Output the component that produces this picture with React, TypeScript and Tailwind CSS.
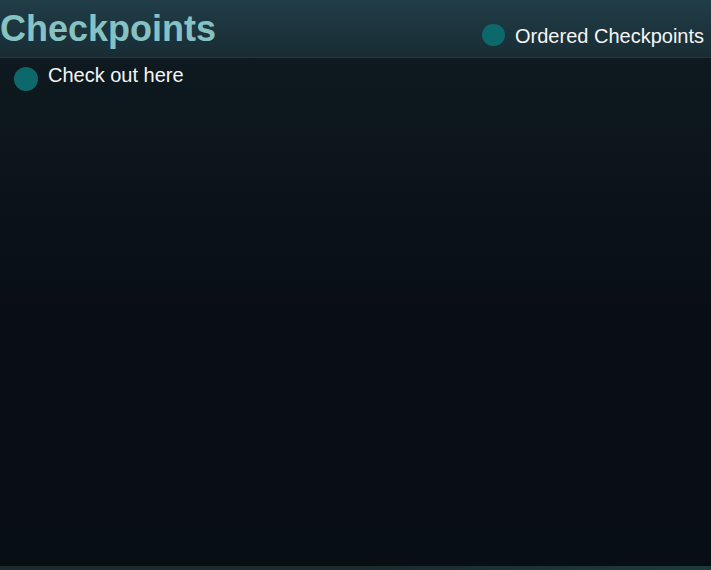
import React from "react";

export default function App() {
  return (
    <div
      className="w-[711px] h-[570px] flex flex-col overflow-hidden bg-[#0a1117]"
      style={{ fontFamily: '"Liberation Sans", Arial, sans-serif' }}
    >
      <div className="h-[58px] shrink-0 flex justify-between items-start bg-gradient-to-b from-[#203d48] to-[#192c34] border-b border-[#26363c]">
        <div className="pt-[11px] text-[36px] leading-[36px] font-bold text-[#86c2c3]">
          Checkpoints
        </div>
        <div className="pt-[24px] pr-[7px] flex items-start gap-[10px]">
          <div className="w-[23px] h-[22px] rounded-full bg-[#0c686b]" />
          <div className="text-[20px] leading-[24px] text-[#f4f6f6]">Ordered Checkpoints</div>
        </div>
      </div>
      <div className="flex-1 flex flex-col bg-gradient-to-b from-[#0e1a20] via-[#080e14] to-[#080f14]">
        <div className="flex items-start pl-[14px] gap-[10px]">
          <div className="mt-[9px] w-[24px] h-[24px] rounded-full bg-[#0c686b]" />
          <div className="mt-[5px] text-[20px] leading-[24px] text-[#f4f6f6]">Check out here</div>
        </div>
      </div>
      <div className="h-[4px] shrink-0 bg-gradient-to-r from-[#1a2a2f] via-[#1b2b30] to-[#1c3a3c]" />
    </div>
  );
}
